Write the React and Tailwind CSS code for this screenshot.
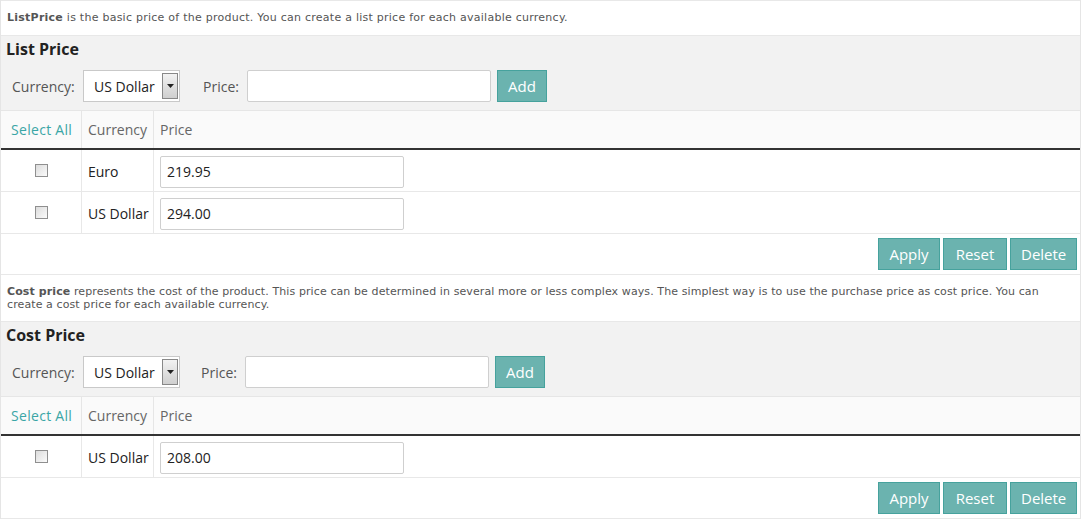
import { useState } from 'react'

const font = { fontFamily: '"Open Sans", "Liberation Sans", sans-serif' }
const descFont = { fontFamily: '"DejaVu Sans", "Liberation Sans", sans-serif' }

function TealButton({ children, className = '' }) {
  return (
    <button className={`h-[32px] px-[10px] bg-[#6bb3af] border border-[#46a29d] text-white text-[15px] leading-none ${className}`}>
      {children}
    </button>
  )
}

function Select() {
  return (
    <div className="flex h-[32px] w-[97px] bg-white border border-[#c9c9c9]">
      <span className="flex-1 flex items-center pl-[10px] text-[14px] text-[#222]">US Dollar</span>
      <span className="w-[16px] my-[2px] mr-[1px] flex items-center justify-center border border-[#888] bg-gradient-to-b from-[#f2f2f2] to-[#cfcfcf]">
        <svg width="7" height="4" viewBox="0 0 7 4"><path d="M0 0h7L3.5 4z" fill="#222" /></svg>
      </span>
    </div>
  )
}

function Checkbox() {
  return <span className="block w-[13px] h-[13px] border border-[#8f8f8f] bg-gradient-to-br from-[#dcdcdc] to-[#fbfbfb]" />
}

function PriceBlock({ title, priceLabelX, rows }) {
  const [checked] = useState([])
  return (
    <div>
      {/* add row */}
      <div className="bg-[#f2f2f2] border-t border-[#e8e8e8] px-[5px] pt-[2px] pb-[8px]">
        <h3 className="text-[16px] font-bold text-[#222] leading-[22px] mb-[10px]">{title}</h3>
        <div className="flex items-center pl-[6px]">
          <span className="text-[14px] text-[#555] w-[71px]">Currency:</span>
          <Select />
          <span className={`text-[14px] text-[#555] w-[44px] ${priceLabelX}`}>Price:</span>
          <input className="h-[32px] w-[244px] bg-white border border-[#cfcfcf] rounded-[2px] mr-[6px]" />
          <TealButton className="w-[50px]">Add</TealButton>
        </div>
      </div>
      {/* table */}
      <div className="flex h-[40px] bg-[#fafafa] border-t border-[#e6e6e6] border-b-2 border-b-[#333] text-[14px]">
        <div className="w-[81px] flex items-center pl-[10px] text-[#3aa6a6] border-r border-[#e6e6e6] tracking-[0.3px]">Select All</div>
        <div className="w-[72px] flex items-center pl-[6px] text-[#666] border-r border-[#e6e6e6]">Currency</div>
        <div className="flex-1 flex items-center pl-[6px] text-[#666]">Price</div>
      </div>
      {rows.map((r) => (
        <div key={r.c} className="flex h-[42px] border-b border-[#e8e8e8] text-[14px] text-[#222]">
          <div className="w-[81px] flex items-center justify-center border-r border-[#e8e8e8]"><Checkbox /></div>
          <div className="w-[72px] flex items-center pl-[6px] pt-[2px] border-r border-[#e8e8e8]">{r.c}</div>
          <div className="flex-1 flex items-center pl-[6px] pt-[2px]">
            <input readOnly value={r.p} className="h-[32px] w-[244px] border border-[#cfcfcf] rounded-[2px] px-[6px] text-[14px] text-[#222] bg-white" style={font} />
          </div>
        </div>
      ))}
      <div className="flex justify-end gap-[3px] pr-[3px] py-[4px] border-b border-[#e8e8e8]">
        <TealButton className="w-[62px]">Apply</TealButton>
        <TealButton className="w-[64px]">Reset</TealButton>
        <TealButton className="w-[67px]">Delete</TealButton>
      </div>
    </div>
  )
}

export default function App() {
  return (
    <div className="w-[1081px] bg-white border-x border-[#e5e5e5]" style={font}>
      <p className="h-[35px] border-t border-[#e8e8e8] flex items-center px-[6px] text-[11px] tracking-[0.25px] text-[#555]" style={descFont}>
        <span><b>ListPrice</b> is the basic price of the product. You can create a list price for each available currency.</span>
      </p>
      <PriceBlock
        title="List Price"
        priceLabelX="ml-[23px]"
        rows={[{ c: 'Euro', p: '219.95' }, { c: 'US Dollar', p: '294.00' }]}
      />
      <p className="px-[6px] pt-[10px] pb-[10px] text-[11px] tracking-[0.1px] leading-[13px] text-[#555]" style={descFont}>
        <b>Cost price</b> represents the cost of the product. This price can be determined in several more or less complex ways. The simplest way is to use the purchase price as cost price. You can create a cost price for each available currency.
      </p>
      <PriceBlock
        title="Cost Price"
        priceLabelX="ml-[21px]"
        rows={[{ c: 'US Dollar', p: '208.00' }]}
      />
    </div>
  )
}
